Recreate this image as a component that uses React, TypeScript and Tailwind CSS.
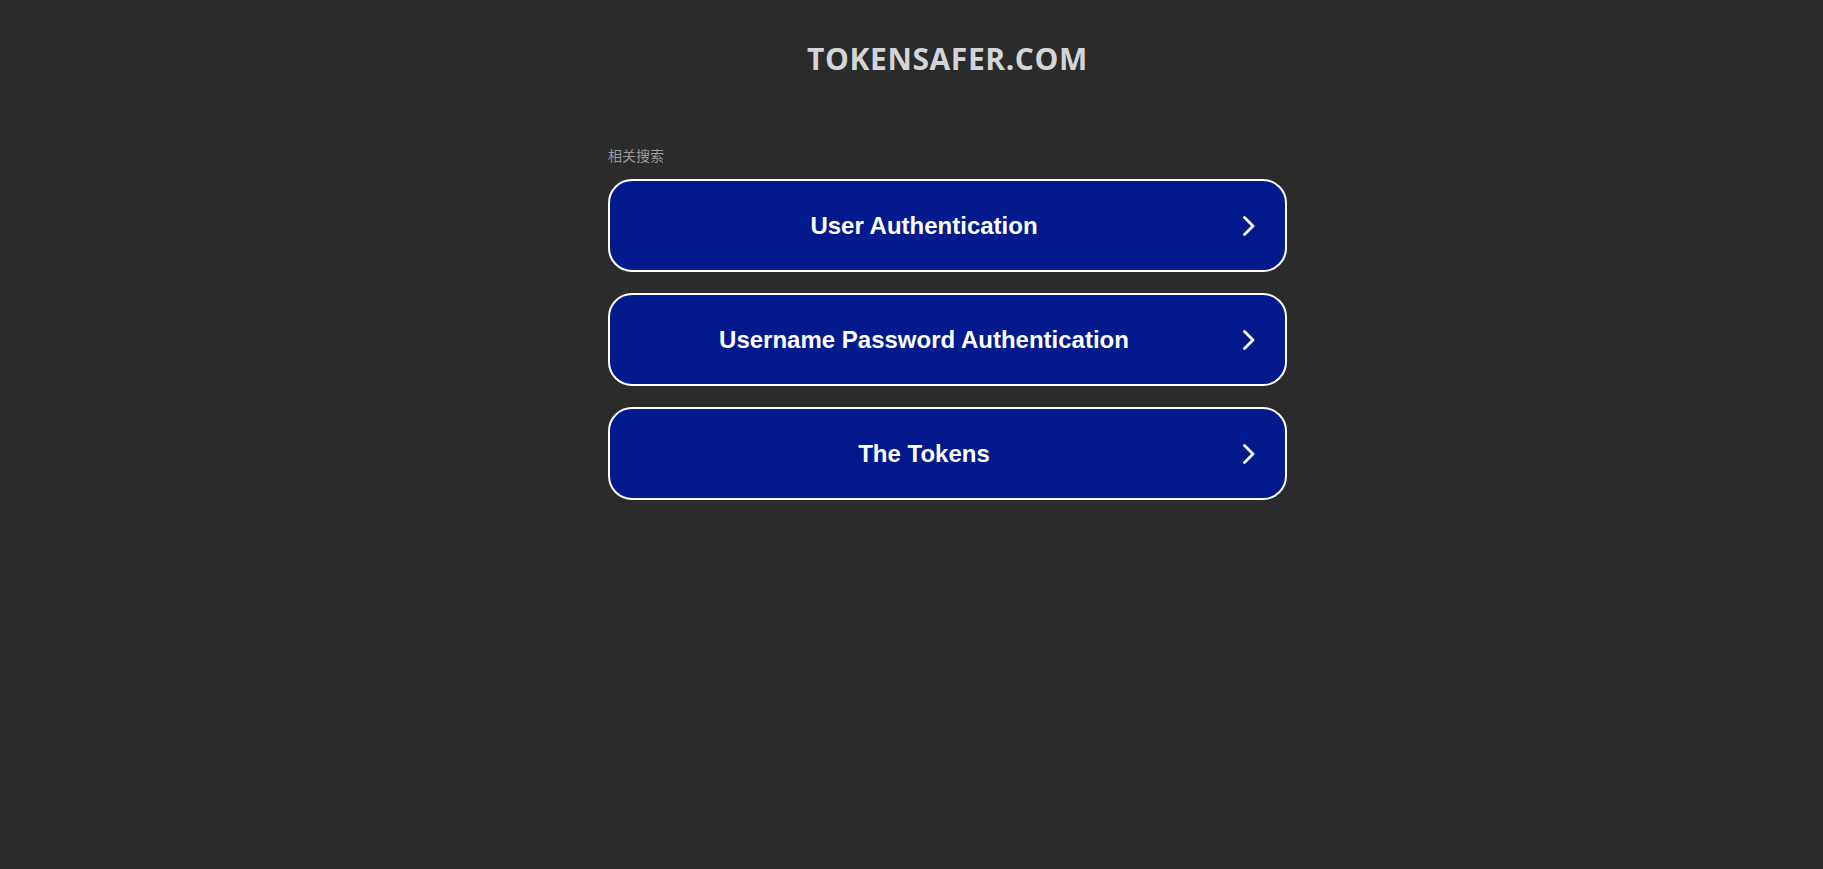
const links = ['User Authentication', 'Username Password Authentication', 'The Tokens']

function Chevron() {
  return (
    <div className="flex w-[47px] shrink-0 items-center pl-[4px]">
      <svg width="14" height="20" viewBox="0 0 14 20" fill="none">
        <polyline points="2.5,1.5 11,10 2.5,18.5" stroke="white" strokeWidth="2.8" strokeLinecap="round" strokeLinejoin="round" />
      </svg>
    </div>
  )
}

export default function App() {
  return (
    <div className="min-h-screen bg-[#2b2b2b]">
      <div className="flex flex-col items-center pl-[72px]">
        <h1 className="pt-[39px] font-['Open_Sans',sans-serif] text-[30px] leading-[40px] font-bold tracking-[0.02em] text-[#d3d5d8]">
          TOKENSAFER.COM
        </h1>
        <div className="mt-[67px] w-[679px]">
          <p className="mb-[14px] font-['Noto_Sans_CJK_SC',sans-serif] text-[14px] leading-[19px] text-[#9a9a9a]">相关搜索</p>
          <div className="flex flex-col gap-[21px]">
            {links.map((l) => (
              <a
                key={l}
                href="#"
                className="flex h-[93px] items-center rounded-[24px] border-2 border-white bg-[#021a8b] font-['Liberation_Sans',Arial,sans-serif] text-[24px] font-bold text-white"
              >
                <span className="flex-1 text-center">{l}</span>
                <Chevron />
              </a>
            ))}
          </div>
        </div>
      </div>
    </div>
  )
}
